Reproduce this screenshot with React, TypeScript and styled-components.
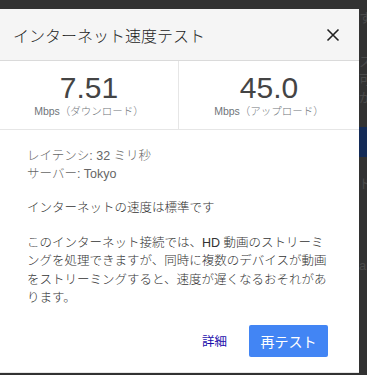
import styled, { createGlobalStyle } from "styled-components";

const GlobalStyle = createGlobalStyle`
  html, body {
    margin: 0;
    padding: 0;
    background: #323232;
  }
  body {
    font-family: "Liberation Sans", Arial, "Noto Sans CJK JP", sans-serif;
  }
`;

const Page = styled.div`
  display: flex;
  width: 367px;
  height: 375px;
  padding-top: 9px;
  box-sizing: border-box;
  overflow: hidden;
`;

const Dialog = styled.div`
  width: 359px;
  flex: none;
  background: #fff;
  display: flex;
  flex-direction: column;
  border-bottom: 1px solid #e6e6e6;
  height: 364px;
  box-sizing: border-box;
`;

const Header = styled.div`
  display: flex;
  align-items: center;
  justify-content: space-between;
  height: 52px;
  padding: 0 18px 0 13px;
  box-sizing: border-box;
  background: #f5f5f5;
  border-bottom: 1px solid #dadada;
`;

const Title = styled.h1`
  margin: 0;
  font-size: 16px;
  font-weight: 300;
  color: #222;
`;

const CloseButton = styled.button`
  border: none;
  background: none;
  padding: 0;
  width: 16px;
  height: 16px;
  display: flex;
  align-items: center;
  justify-content: center;
  cursor: pointer;
`;

const Stats = styled.div`
  display: grid;
  grid-template-columns: 179px 1fr;
  height: 68px;
  border-bottom: 1px solid #e6e6e6;
`;

const Stat = styled.div<{ $divider?: boolean }>`
  display: flex;
  flex-direction: column;
  align-items: center;
  padding-top: 11px;
  border-right: ${(p) => (p.$divider ? "1px solid #e6e6e6" : "none")};
`;

const Value = styled.div`
  font-size: 30px;
  line-height: 32px;
  color: #444;
`;

const Unit = styled.div`
  font-size: 10.5px;
  line-height: 14px;
  font-weight: 300;
  color: #70757a;
`;

const Body = styled.div`
  padding: 18px 27px 0 27px;
  font-size: 12.5px;
  line-height: 18.5px;
  font-weight: 300;
  color: #333;
`;

const Meta = styled.div`
  color: #666;
  line-height: 17.5px;
`;

const Para = styled.p`
  margin: 16px 0 0 0;
`;

const Actions = styled.div`
  display: flex;
  justify-content: flex-end;
  align-items: center;
  gap: 22px;
  padding: 17px 31px 0 0;
`;

const LinkButton = styled.button`
  border: none;
  background: none;
  padding: 0;
  font: inherit;
  font-size: 12.5px;
  color: #1a0dab;
  cursor: pointer;
`;

const PrimaryButton = styled.button`
  border: none;
  border-radius: 2px;
  background: #4285f4;
  color: #fff;
  font: inherit;
  font-size: 14px;
  width: 79px;
  height: 32px;
  cursor: pointer;
`;

const Strip = styled.div`
  width: 8px;
  flex: none;
  overflow: hidden;
  display: flex;
  flex-direction: column;
  font-size: 13px;
  line-height: 18px;
  color: #4a4a4a;
`;

const Peek = styled.div<{ $top: number }>`
  margin-top: ${(p) => p.$top}px;
  white-space: nowrap;
`;

const NavyBlock = styled.div`
  margin-top: 20px;
  height: 30px;
  background: #142b57;
`;

export default function App() {
  return (
    <>
      <GlobalStyle />
      <Page>
        <Dialog>
          <Header>
            <Title>インターネット速度テスト</Title>
            <CloseButton aria-label="閉じる">
              <svg width="14" height="14" viewBox="0 0 14 14">
                <path d="M1.5 1.5L12.5 12.5M12.5 1.5L1.5 12.5" stroke="#222" strokeWidth="1.6" />
              </svg>
            </CloseButton>
          </Header>
          <Stats>
            <Stat $divider>
              <Value>7.51</Value>
              <Unit>Mbps（ダウンロード）</Unit>
            </Stat>
            <Stat>
              <Value>45.0</Value>
              <Unit>Mbps（アップロード）</Unit>
            </Stat>
          </Stats>
          <Body>
            <Meta>
              レイテンシ: 32 ミリ秒
              <br />
              サーバー: Tokyo
            </Meta>
            <Para>インターネットの速度は標準です</Para>
            <Para>
              このインターネット接続では、HD 動画のストリーミングを処理できますが、同時に複数のデバイスが動画をストリーミングすると、速度が遅くなるおそれがあります。
            </Para>
          </Body>
          <Actions>
            <LinkButton>詳細</LinkButton>
            <PrimaryButton>再テスト</PrimaryButton>
          </Actions>
        </Dialog>
        <Strip>
          <Peek $top={0}>す</Peek>
          <Peek $top={26}>ス</Peek>
          <Peek $top={0}>可</Peek>
          <Peek $top={0}>が</Peek>
          <NavyBlock />
          <Peek $top={18}>ド</Peek>
          <Peek $top={64}>ar</Peek>
        </Strip>
      </Page>
    </>
  );
}
